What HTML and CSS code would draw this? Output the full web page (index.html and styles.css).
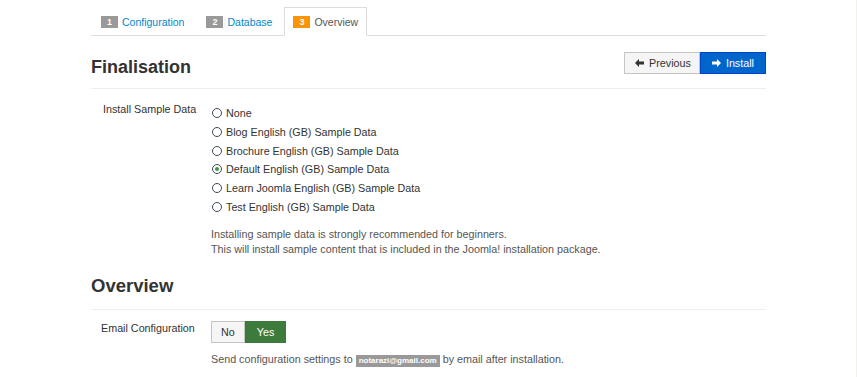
FILE: index.html
```html
<!DOCTYPE html>
<html lang="en">
<head>
    <meta charset="UTF-8">
    <title>Joomla! Installation - Overview</title>
    <link rel="stylesheet" href="styles.css">
</head>
<body>
<div class="container">
    <!-- Steps -->
    <ul class="nav-tabs">
        <li><a href="#"><span class="badge">1</span>Configuration</a></li>
        <li><a href="#"><span class="badge">2</span>Database</a></li>
        <li class="active"><a href="#"><span class="badge badge-warning">3</span>Overview</a></li>
    </ul>

    <div class="page-head">
        <h3>Finalisation</h3>
        <div class="btn-group">
            <a href="#" class="btn">
                <svg width="9" height="8" viewBox="0 0 9 8"><path d="M0 4 L4 0 L4 2.5 L9 2.5 L9 5.5 L4 5.5 L4 8 Z" fill="#333"/></svg>
                Previous
            </a>
            <a href="#" class="btn btn-primary">
                <svg width="9" height="8" viewBox="0 0 9 8"><path d="M9 4 L5 0 L5 2.5 L0 2.5 L0 5.5 L5 5.5 L5 8 Z" fill="#fff"/></svg>
                Install
            </a>
        </div>
    </div>

    <div class="control-group">
        <div class="control-label">Install Sample Data</div>
        <div class="controls">
            <ul class="radio-list">
                <li><label><input type="radio" name="sample"> None</label></li>
                <li><label><input type="radio" name="sample"> Blog English (GB) Sample Data</label></li>
                <li><label><input type="radio" name="sample"> Brochure English (GB) Sample Data</label></li>
                <li><label><input type="radio" name="sample" checked> Default English (GB) Sample Data</label></li>
                <li><label><input type="radio" name="sample"> Learn Joomla English (GB) Sample Data</label></li>
                <li><label><input type="radio" name="sample"> Test English (GB) Sample Data</label></li>
            </ul>
            <p class="help-block">
                Installing sample data is strongly recommended for beginners.<br>
                This will install sample content that is included in the Joomla! installation package.
            </p>
        </div>
    </div>

    <div class="page-head page-head-small">
        <h3>Overview</h3>
    </div>

    <div class="control-group group-email">
        <div class="control-label label-email">Email Configuration</div>
        <div class="controls">
            <div class="toggle">
                <a href="#" class="btn">No</a>
                <a href="#" class="btn btn-success">Yes</a>
            </div>
            <p class="help-block help-email">
                Send configuration settings to <span class="email">notarazi@gmail.com</span> by email after installation.
            </p>
        </div>
    </div>
</div>
<div class="edge"></div>
</body>
</html>
```

FILE: styles.css
```css
* {
    margin: 0;
    padding: 0;
    box-sizing: border-box;
}

body {
    font-family: "Liberation Sans", Arial, sans-serif;
    font-size: 10.75px;
    color: #333;
    background-color: #fff;
    overflow: hidden;
}

a {
    text-decoration: none;
}

.container {
    width: 675px;
    margin: 0 auto;
    padding-top: 7px;
}

/* Steps tabs */
.nav-tabs {
    list-style: none;
    display: flex;
    border-bottom: 1px solid #ddd;
    font-size: 10.5px;
}

.nav-tabs li {
    margin-right: 2px;
    margin-bottom: -1px;
}

.nav-tabs a {
    display: flex;
    align-items: center;
    height: 29px;
    padding: 0 9px;
    border: 1px solid transparent;
    color: #0088cc;
}

.nav-tabs .active a {
    color: #555;
    border-color: #ddd;
    border-bottom-color: #fff;
    background-color: #fff;
    padding: 0 8px;
}

.badge {
    display: inline-block;
    width: 17px;
    height: 12px;
    line-height: 12px;
    margin-right: 4px;
    background-color: #999;
    color: #fff;
    font-size: 9px;
    font-weight: bold;
    text-align: center;
}

.badge-warning {
    background-color: #f89406;
}

/* Heading rows */
.page-head {
    display: flex;
    justify-content: space-between;
    align-items: flex-start;
    padding-top: 16px;
    padding-bottom: 8px;
    border-bottom: 1px solid #eee;
}

.page-head h3 {
    font-size: 18px;
    line-height: 26px;
    font-weight: bold;
    color: #333;
    margin-top: 2px;
}

.page-head-small {
    padding-top: 7px;
    padding-bottom: 10px;
}

.page-head-small h3 {
    margin-top: 0;
    font-size: 18.5px;
}

.btn-group,
.toggle {
    display: flex;
}

.btn {
    display: flex;
    align-items: center;
    gap: 5px;
    height: 22px;
    padding: 0 9px;
    background-color: #f5f5f5;
    border: 1px solid #c5c5c5;
    color: #333;
}

.btn-group .btn {
    padding: 0 8px 0 10px;
}

.btn-group .btn-primary {
    padding: 0 11px;
}

.btn-primary {
    background-color: #0066cc;
    border-color: #0044cc;
    color: #fff;
}

.btn-success {
    background-color: #3d7b3d;
    border-color: #3a7a3a;
    color: #fff;
    padding: 0 11px;
}

/* Form */
.control-group {
    display: flex;
    padding-top: 13px;
}

.control-label {
    width: 120px;
    padding-left: 12px;
    padding-top: 1px;
}

.label-email {
    padding-left: 10px;
    padding-top: 1px;
}

.group-email {
    padding-top: 11px;
}

.controls {
    flex: 1;
}

.radio-list {
    list-style: none;
    padding-top: 5px;
}

.radio-list li {
    height: 18.8px;
}

.radio-list label {
    display: flex;
    align-items: center;
    gap: 3px;
    height: 12px;
}

.radio-list input {
    appearance: none;
    width: 10px;
    height: 10px;
    margin: 0 1px;
    border: 1px solid #3d4a5c;
    border-radius: 50%;
    background-color: #fff;
    display: grid;
    place-items: center;
}

.radio-list input:checked::after {
    content: "";
    width: 4px;
    height: 4px;
    border-radius: 50%;
    background-color: #3d9a3d;
}

.help-block {
    color: #555;
    line-height: 15px;
    margin-top: 7px;
    margin-bottom: 9px;
}

.help-email {
    margin-top: 9px;
}

.email {
    display: inline-block;
    background-color: #999;
    color: #fff;
    font-size: 8px;
    font-weight: bold;
    line-height: 12px;
    padding: 0 3px;
}

.edge {
    position: fixed;
    top: 0;
    right: 0;
    width: 1px;
    height: 100%;
    background-color: #f0f0ec;
}
```
